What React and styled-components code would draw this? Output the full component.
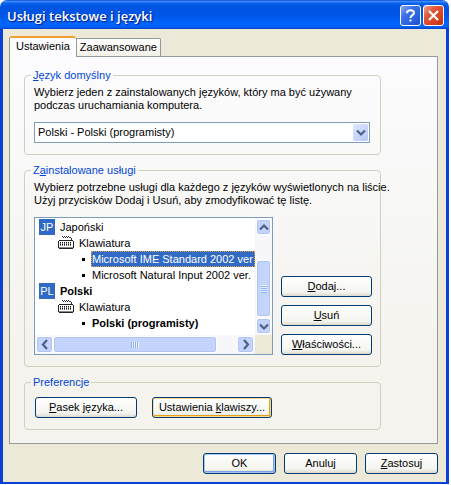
import styled, { createGlobalStyle, css } from "styled-components";

const GlobalStyle = createGlobalStyle`
  * {
    box-sizing: border-box;
  }

  body {
    margin: 0;
    background-color: #fff;
    color: #000;
    font-family: "Liberation Sans", Arial, sans-serif;
    font-size: 11px;
    line-height: 13px;
  }

  button, select {
    font: inherit;
    color: inherit;
  }
`;

const StyledWindow = styled.div`
  display: flex;
  flex-direction: column;
  margin: 0 2px 1px 0;
  overflow: hidden;
  border-radius: 7px 7px 0 0;
  background-color: #ece9d8;
`;

const StyledTitleBar = styled.header`
  display: flex;
  align-items: center;
  gap: 2px;
  height: 29px;
  padding: 2px 5px 0 7px;
  background: linear-gradient(
    #0a4bc8 0,
    #3a8cff 5%,
    #1166ee 10%,
    #0054e3 20%,
    #0055e5 50%,
    #0062f8 75%,
    #0066ff 88%,
    #0058e8 95%,
    #0040c0 100%
  );
`;

const StyledTitle = styled.h1`
  flex: 1;
  margin: 0;
  color: #fff;
  font-family: "Open Sans", "Noto Sans", sans-serif;
  font-size: 13px;
  font-weight: 600;
  line-height: 20px;
  white-space: nowrap;
  text-shadow: 1px 1px 1px #0a1883;
`;

const StyledTitleButton = styled.button`
  display: flex;
  align-items: center;
  justify-content: center;
  width: 21px;
  height: 21px;
  padding: 0;
  border: 1px solid #fff;
  border-radius: 3px;
  background: ${({ $close }) =>
    $close
      ? "linear-gradient(135deg, #f0a48c, #e0573a 35%, #d84020 70%, #b83010)"
      : "linear-gradient(135deg, #88a8f4, #3c70e8 35%, #2a62e0 70%, #1c4cc8)"};
`;

const StyledBody = styled.main`
  padding: 7px 8px 8px 6px;
  border: solid #0a3fd8;
  border-width: 0 3px 2px;
`;

const StyledTabs = styled.div`
  display: flex;
  align-items: flex-end;
`;

const StyledTab = styled.button`
  position: relative;
  height: 18px;
  padding: 0 3px;
  border: 1px solid #919b9c;
  border-bottom: none;
  border-radius: 0 2px 0 0;
  background: linear-gradient(#fff, #f2f1e8);
  white-space: nowrap;

  ${({ $active }) =>
    $active &&
    css`
      z-index: 1;
      height: 21px;
      margin-bottom: -1px;
      padding: 0 6px 2px;
      border-top: 2px solid #f0a030;
      border-right: none;
      border-radius: 3px 3px 0 0;
      background: #fcfcfe;
    `}
`;

const StyledPanel = styled.section`
  display: flex;
  flex-direction: column;
  gap: 9px;
  padding: 12px 56px 13px 14px;
  border: 1px solid #919b9c;
  background: linear-gradient(#fcfcfe, #f4f3ee 75%);
`;

const StyledGroup = styled.fieldset`
  min-width: 0;
  margin: 0;
  padding: 4px 8px 11px 9px;
  border: 1px solid #d0d0bf;
  border-radius: 4px;
`;

const StyledLegend = styled.legend`
  margin-left: -3px;
  padding: 0 2px;
  color: #0046d5;
`;

const StyledText = styled.p`
  margin: 0 0 10px;
  white-space: nowrap;
`;

const StyledSelectBox = styled.div`
  position: relative;
  margin-right: 2px;
`;

const StyledSelect = styled.select`
  display: block;
  width: 100%;
  height: 21px;
  padding: 0 20px 0 3px;
  border: 1px solid #7f9db9;
  border-radius: 0;
  appearance: none;
  background-color: #fff;
`;

const StyledSelectArrow = styled.span`
  position: absolute;
  top: 2px;
  right: 2px;
  display: flex;
  align-items: center;
  justify-content: center;
  width: 15px;
  height: 17px;
  border-radius: 2px;
  background: linear-gradient(135deg, #dce6fe, #b4c8f6);
  pointer-events: none;
`;

const StyledServices = styled.div`
  display: flex;
  align-items: flex-end;
  gap: 8px;
`;

const StyledListBox = styled.div`
  flex: 1;
  display: grid;
  grid-template-columns: minmax(0, 1fr) 17px;
  grid-template-rows: 117px 19px;
  min-width: 0;
  border: 1px solid #7f9db9;
  background-color: #fff;
`;

const StyledTree = styled.ul`
  margin: 0;
  padding: 1px 0 0 4px;
  overflow: hidden;
  list-style: none;
`;

const StyledTreeRow = styled.li`
  display: flex;
  align-items: center;
  height: 16px;
  padding-left: ${({ $level }) => [0, 19, 43][$level]}px;
  gap: ${({ $level }) => [4, 4, 6][$level]}px;
  font-weight: ${({ $bold }) => ($bold ? 700 : 400)};
  white-space: nowrap;
`;

const StyledLangBadge = styled.span`
  width: 16px;
  height: 16px;
  background-color: #316ac5;
  color: #fff;
  font-weight: 400;
  line-height: 16px;
  text-align: center;
`;

const StyledBullet = styled.span`
  flex: none;
  width: 3px;
  height: 3px;
  background-color: #000;
`;

const StyledTreeLabel = styled.span`
  flex: 1;
  padding-left: 1px;
  line-height: 16px;

  ${({ $selected }) =>
    $selected &&
    css`
      background-color: #316ac5;
      color: #fff;
      outline: 1px dotted #e0a040;
      outline-offset: -1px;
    `}
`;

const StyledScrollbar = styled.div`
  display: flex;
  flex-direction: ${({ $vertical }) => ($vertical ? "column" : "row")};
  padding: 1px;
  background-color: #f6f6fb;
`;

const scrollPart = css`
  display: flex;
  align-items: center;
  justify-content: center;
  padding: 0;
  border: 1px solid #fff;
  border-radius: 3px;
  background-color: #c4d4fc;
  box-shadow: inset 0 0 0 1px #b0c4f4;
`;

const StyledScrollButton = styled.button`
  ${scrollPart}
  flex: none;
  width: ${({ $vertical }) => ($vertical ? 15 : 17)}px;
  height: ${({ $vertical }) => ($vertical ? 16 : 17)}px;
`;

const StyledThumb = styled.div`
  ${scrollPart}
  flex: ${({ $size }) => $size};
`;

const StyledTrack = styled.div`
  flex: ${({ $size }) => $size};
`;

const StyledCorner = styled.div`
  background-color: #ece9d8;
`;

const StyledActions = styled.div`
  display: flex;
  flex-direction: column;
  gap: 8px;
  width: 91px;
`;

const StyledPreferences = styled.div`
  display: flex;
  gap: 15px;
  padding: 4px 0 0 1px;
`;

const StyledFooter = styled.footer`
  display: flex;
  justify-content: flex-end;
  gap: 8px;
  margin-top: 9px;
`;

const ringColors = {
  default: ["#a6c4f0", "#7ba2e7"],
  hot: ["#fdd889", "#e5a01a"],
};

const StyledButton = styled.button`
  width: ${({ $width }) => ($width ? `${$width}px` : "auto")};
  height: 21px;
  padding: 0;
  border: 1px solid #003c74;
  border-radius: 3px;
  background: linear-gradient(#fff, #f4f4f0 80%, #dcd8cc);
  white-space: nowrap;

  ${({ $ring }) =>
    $ring &&
    css`
      box-shadow:
        inset 0 0 0 1px ${ringColors[$ring][0]},
        inset -1px -1px 0 1px ${ringColors[$ring][1]};
    `}
`;

const chevrons = {
  up: "M0 5.5 4 1.5 8 5.5",
  down: "M0 1.5 4 5.5 8 1.5",
  left: "M6 -1 2 3.5 6 8",
  right: "M2 -1 6 3.5 2 8",
};

function Chevron({ direction }) {
  return (
    <svg width="8" height="7" viewBox="0 0 8 7" overflow="visible" aria-hidden="true">
      <path d={chevrons[direction]} fill="none" stroke="#4d6185" strokeWidth="2.2" />
    </svg>
  );
}

function Grip({ vertical }) {
  return (
    <svg
      width="8"
      height="8"
      viewBox="0 0 8 8"
      shapeRendering="crispEdges"
      transform={vertical ? undefined : "rotate(90)"}
      aria-hidden="true"
    >
      <path d="M1 0.5h6M1 2.5h6M1 4.5h6M1 6.5h6" stroke="#eef4fe" />
      <path d="M1 1.5h6M1 3.5h6M1 5.5h6M1 7.5h6" stroke="#8cb0f8" />
    </svg>
  );
}

function KeyboardIcon() {
  return (
    <svg width="16" height="16" viewBox="0 0 16 16" shapeRendering="crispEdges" aria-hidden="true">
      <path
        d="M4 1h1v1H4zM5 2h1v1H5zM6 1h1v1H6zM7 2h1v1H7zM8 1h1v1H8zM9 2h1v1H9zM10 1h1v1h-1zM11 2h2v1h-2zM13 3h1v2h-1z"
        fill="#333"
      />
      <path d="M1 5h14v1h1v7h-1v1H1v-1H0V6h1z" fill="#222" />
      <path d="M1 6h14v6H1z" fill="#fff" />
      <path d="M2 7.5h12M2 9.5h12" stroke="#111" strokeDasharray="1 1" />
      <path d="M2 8.5h12M2 10.5h12" stroke="#777" strokeDasharray="1 1" />
      <path d="M1 12.5h14" stroke="#888" />
    </svg>
  );
}

function Scrollbar({ vertical, before, thumb, after }) {
  return (
    <StyledScrollbar $vertical={vertical}>
      <StyledScrollButton $vertical={vertical} aria-label={vertical ? "W górę" : "W lewo"}>
        <Chevron direction={vertical ? "up" : "left"} />
      </StyledScrollButton>
      <StyledTrack $size={before} />
      <StyledThumb $size={thumb}>
        <Grip vertical={vertical} />
      </StyledThumb>
      <StyledTrack $size={after} />
      <StyledScrollButton $vertical={vertical} aria-label={vertical ? "W dół" : "W prawo"}>
        <Chevron direction={vertical ? "down" : "right"} />
      </StyledScrollButton>
    </StyledScrollbar>
  );
}

const services = [
  { level: 0, code: "JP", label: "Japoński" },
  { level: 1, label: "Klawiatura" },
  { level: 2, label: "Microsoft IME Standard 2002 ver", selected: true },
  { level: 2, label: "Microsoft Natural Input 2002 ver." },
  { level: 0, code: "PL", label: "Polski", bold: true },
  { level: 1, label: "Klawiatura" },
  { level: 2, label: "Polski (programisty)", bold: true },
];

function TreeRow({ item }) {
  return (
    <StyledTreeRow $level={item.level} $bold={item.bold}>
      {item.level === 0 && <StyledLangBadge>{item.code}</StyledLangBadge>}
      {item.level === 1 && <KeyboardIcon />}
      {item.level === 2 && <StyledBullet />}
      <StyledTreeLabel $selected={item.selected}>{item.label}</StyledTreeLabel>
    </StyledTreeRow>
  );
}

function App() {
  return (
    <>
      <GlobalStyle />
      <StyledWindow>
        <StyledTitleBar>
          <StyledTitle>Usługi tekstowe i języki</StyledTitle>
          <StyledTitleButton aria-label="Pomoc">
            <svg width="11" height="13" viewBox="0 0 11 13" aria-hidden="true">
              <path
                d="M2 4.2C2 0.3 9 0.3 9 4C9 6.2 5.5 6.2 5.5 9"
                fill="none"
                stroke="#fff"
                strokeWidth="2"
              />
              <path d="M4.5 10.5h2v2h-2z" fill="#fff" />
            </svg>
          </StyledTitleButton>
          <StyledTitleButton $close aria-label="Zamknij">
            <svg width="11" height="11" viewBox="0 0 11 11" aria-hidden="true">
              <path d="M1 1l9 9M10 1l-9 9" stroke="#fff" strokeWidth="2.2" />
            </svg>
          </StyledTitleButton>
        </StyledTitleBar>

        <StyledBody>
          <StyledTabs role="tablist">
            <StyledTab role="tab" aria-selected="true" $active>
              Ustawienia
            </StyledTab>
            <StyledTab role="tab" aria-selected="false">
              Zaawansowane
            </StyledTab>
          </StyledTabs>

          <StyledPanel role="tabpanel">
            <StyledGroup>
              <StyledLegend>
                <label htmlFor="language">
                  <u>J</u>ęzyk domyślny
                </label>
              </StyledLegend>
              <StyledText>
                Wybierz jeden z zainstalowanych języków, który ma być używany
                <br />
                podczas uruchamiania komputera.
              </StyledText>
              <StyledSelectBox>
                <StyledSelect id="language">
                  <option>Polski - Polski (programisty)</option>
                </StyledSelect>
                <StyledSelectArrow>
                  <Chevron direction="down" />
                </StyledSelectArrow>
              </StyledSelectBox>
            </StyledGroup>

            <StyledGroup>
              <StyledLegend>
                Z<u>a</u>instalowane usługi
              </StyledLegend>
              <StyledText>
                Wybierz potrzebne usługi dla każdego z języków wyświetlonych na liście.
                <br />
                Użyj przycisków Dodaj i Usuń, aby zmodyfikować tę listę.
              </StyledText>
              <StyledServices>
                <StyledListBox>
                  <StyledTree>
                    {services.map((item, i) => (
                      <TreeRow key={i} item={item} />
                    ))}
                  </StyledTree>
                  <Scrollbar vertical before={26} thumb={57} after={1} />
                  <Scrollbar before={0} thumb={165} after={20} />
                  <StyledCorner />
                </StyledListBox>
                <StyledActions>
                  <StyledButton>
                    <u>D</u>odaj...
                  </StyledButton>
                  <StyledButton>
                    <u>U</u>suń
                  </StyledButton>
                  <StyledButton>
                    <u>W</u>łaściwości...
                  </StyledButton>
                </StyledActions>
              </StyledServices>
            </StyledGroup>

            <StyledGroup>
              <StyledLegend>Preferencje</StyledLegend>
              <StyledPreferences>
                <StyledButton $width={102}>
                  <u>P</u>asek języka...
                </StyledButton>
                <StyledButton $width={120} $ring="hot">
                  Ustawienia <u>k</u>lawiszy...
                </StyledButton>
              </StyledPreferences>
            </StyledGroup>
          </StyledPanel>

          <StyledFooter>
            <StyledButton $width={73} $ring="default">
              OK
            </StyledButton>
            <StyledButton $width={73}>Anuluj</StyledButton>
            <StyledButton $width={73}>
              <u>Z</u>astosuj
            </StyledButton>
          </StyledFooter>
        </StyledBody>
      </StyledWindow>
    </>
  );
}

export default App;
